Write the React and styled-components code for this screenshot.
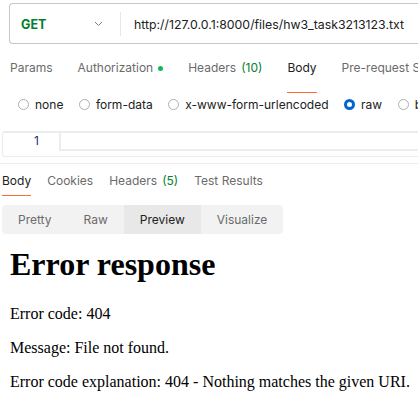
import React from "react";
import styled, { createGlobalStyle } from "styled-components";

const GlobalStyle = createGlobalStyle`
  html, body {
    margin: 0;
    padding: 0;
    background: #ffffff;
    overflow: hidden;
  }
  body {
    font-family: Inter, "Noto Sans", sans-serif;
    color: #212121;
  }
`;

const Page = styled.div`
  width: 418px;
  height: 408px;
  overflow: hidden;
`;

const UrlBar = styled.div`
  display: flex;
  align-items: center;
  height: 41px;
  margin: 3px 0 0 9px;
  border: 1px solid #c6c6c6;
  border-right: none;
  border-radius: 4px 0 0 4px;
  box-sizing: border-box;
`;

const MethodSelect = styled.div`
  display: flex;
  align-items: center;
  justify-content: space-between;
  width: 110px;
  box-sizing: border-box;
  padding: 1px 17px 0 11px;
  color: #007f31;
  font-size: 12.5px;
  font-weight: 700;
`;

const VDivider = styled.div`
  width: 1px;
  height: 24px;
  background: #e6e6e6;
`;

const UrlText = styled.div`
  padding: 1px 0 0 13px;
  font-size: 12.3px;
  white-space: nowrap;
  color: #212121;
`;

const TabRow = styled.div`
  display: flex;
  gap: ${(p) => p.$gap}px;
  padding-left: ${(p) => p.$left}px;
  margin-top: ${(p) => p.$top}px;
  white-space: nowrap;
`;

const Tab = styled.div`
  display: flex;
  align-items: center;
  font-size: 12px;
  line-height: 16px;
  padding: ${(p) => p.$pad};
  color: ${(p) => (p.$active ? "#212121" : "#6b6b6b")};
  border-bottom: 1px solid ${(p) => (p.$active ? "#ff6c37" : "transparent")};
`;

const Count = styled.span`
  color: #007f31;
  margin-left: 5px;
`;

const Dot = styled.span`
  width: 5px;
  height: 5px;
  border-radius: 50%;
  background: #0cbb52;
  margin-left: 5px;
`;

const RadioRow = styled.div`
  display: flex;
  align-items: center;
  gap: 15.5px;
  height: 20px;
  margin-top: 1px;
  padding-left: 18px;
  white-space: nowrap;
`;

const RadioItem = styled.label`
  display: flex;
  align-items: center;
  gap: 6px;
  font-size: 12px;
  color: #212121;
`;

const RadioDot = styled.span`
  width: 11px;
  height: 11px;
  box-sizing: border-box;
  border-radius: 50%;
  border: ${(p) => (p.$on ? "3.5px solid #0265d2" : "1px solid #b0b0b0")};
  background: #ffffff;
`;

const Editor = styled.div`
  display: flex;
  margin: 17px 0 0 2px;
  height: 26px;
  box-sizing: border-box;
  border: 1px solid #ececec;
  border-top-width: 2px;
  border-right: none;
  border-radius: 3px 0 0 3px;
`;

const Gutter = styled.div`
  width: 56px;
  box-sizing: border-box;
  padding-right: 20px;
  text-align: right;
  font-size: 12px;
  line-height: 16px;
  color: #1d2d6e;
`;

const ActiveLine = styled.div`
  flex: 1;
  height: 18px;
  box-sizing: border-box;
  border: 2px solid #ececec;
  border-top: none;
  border-right: none;
`;

const HDivider = styled.div`
  height: 1px;
  background: #ececec;
  margin-top: 6px;
`;

const Segmented = styled.div`
  display: flex;
  width: 281px;
  height: 29px;
  margin: 9px 0 0 2px;
  border-radius: 4px;
  background: #f2f2f2;
  overflow: hidden;
`;

const Segment = styled.div`
  display: flex;
  align-items: center;
  padding: 0 16px;
  font-size: 12px;
  color: ${(p) => (p.$active ? "#212121" : "#6b6b6b")};
  background: ${(p) => (p.$active ? "#e8e8e8" : "transparent")};
`;

const Preview = styled.div`
  padding: 0 10px;
  font-family: "Liberation Serif", "Times New Roman", serif;
  color: #000000;

  h1 {
    font-size: 32px;
    font-weight: 700;
    margin: 12px 0 22px;
    white-space: nowrap;
  }

  p {
    font-size: 16px;
    margin: 16px 0;
    white-space: nowrap;
  }
`;

const Chevron = () => (
  <svg width="9" height="6" viewBox="0 0 9 6" fill="none">
    <path d="M1 1l3.5 3.5L8 1" stroke="#7a7a7a" strokeWidth="1" />
  </svg>
);

const radios = [
  { label: "none" },
  { label: "form-data" },
  { label: "x-www-form-urlencoded" },
  { label: "raw", on: true },
  { label: "binary" },
];

export default function App() {
  return (
    <Page>
      <GlobalStyle />
      <UrlBar>
        <MethodSelect>
          GET
          <Chevron />
        </MethodSelect>
        <VDivider />
        <UrlText>http://127.0.0.1:8000/files/hw3_task3213123.txt</UrlText>
      </UrlBar>

      <TabRow $gap={25} $left={10} $top={12}>
        <Tab $pad="4px 0 16px">Params</Tab>
        <Tab $pad="4px 0 16px">
          Authorization
          <Dot />
        </Tab>
        <Tab $pad="4px 0 16px">
          Headers<Count>(10)</Count>
        </Tab>
        <Tab $pad="4px 0 16px" $active>
          Body
        </Tab>
        <Tab $pad="4px 0 16px">Pre-request Script</Tab>
      </TabRow>

      <RadioRow>
        {radios.map((r) => (
          <RadioItem key={r.label}>
            <RadioDot $on={r.on} />
            {r.label}
          </RadioItem>
        ))}
      </RadioRow>

      <Editor>
        <Gutter>1</Gutter>
        <ActiveLine />
      </Editor>
      <HDivider />

      <TabRow $gap={16} $left={2} $top={0}>
        <Tab $pad="9px 0 6px" $active>
          Body
        </Tab>
        <Tab $pad="9px 0 6px">Cookies</Tab>
        <Tab $pad="9px 0 6px">
          Headers<Count>(5)</Count>
        </Tab>
        <Tab $pad="9px 0 6px">Test Results</Tab>
      </TabRow>

      <Segmented>
        <Segment>Pretty</Segment>
        <Segment>Raw</Segment>
        <Segment $active>Preview</Segment>
        <Segment>Visualize</Segment>
      </Segmented>

      <Preview>
        <h1>Error response</h1>
        <p>Error code: 404</p>
        <p>Message: File not found.</p>
        <p>Error code explanation: 404 - Nothing matches the given URI.</p>
      </Preview>
    </Page>
  );
}
